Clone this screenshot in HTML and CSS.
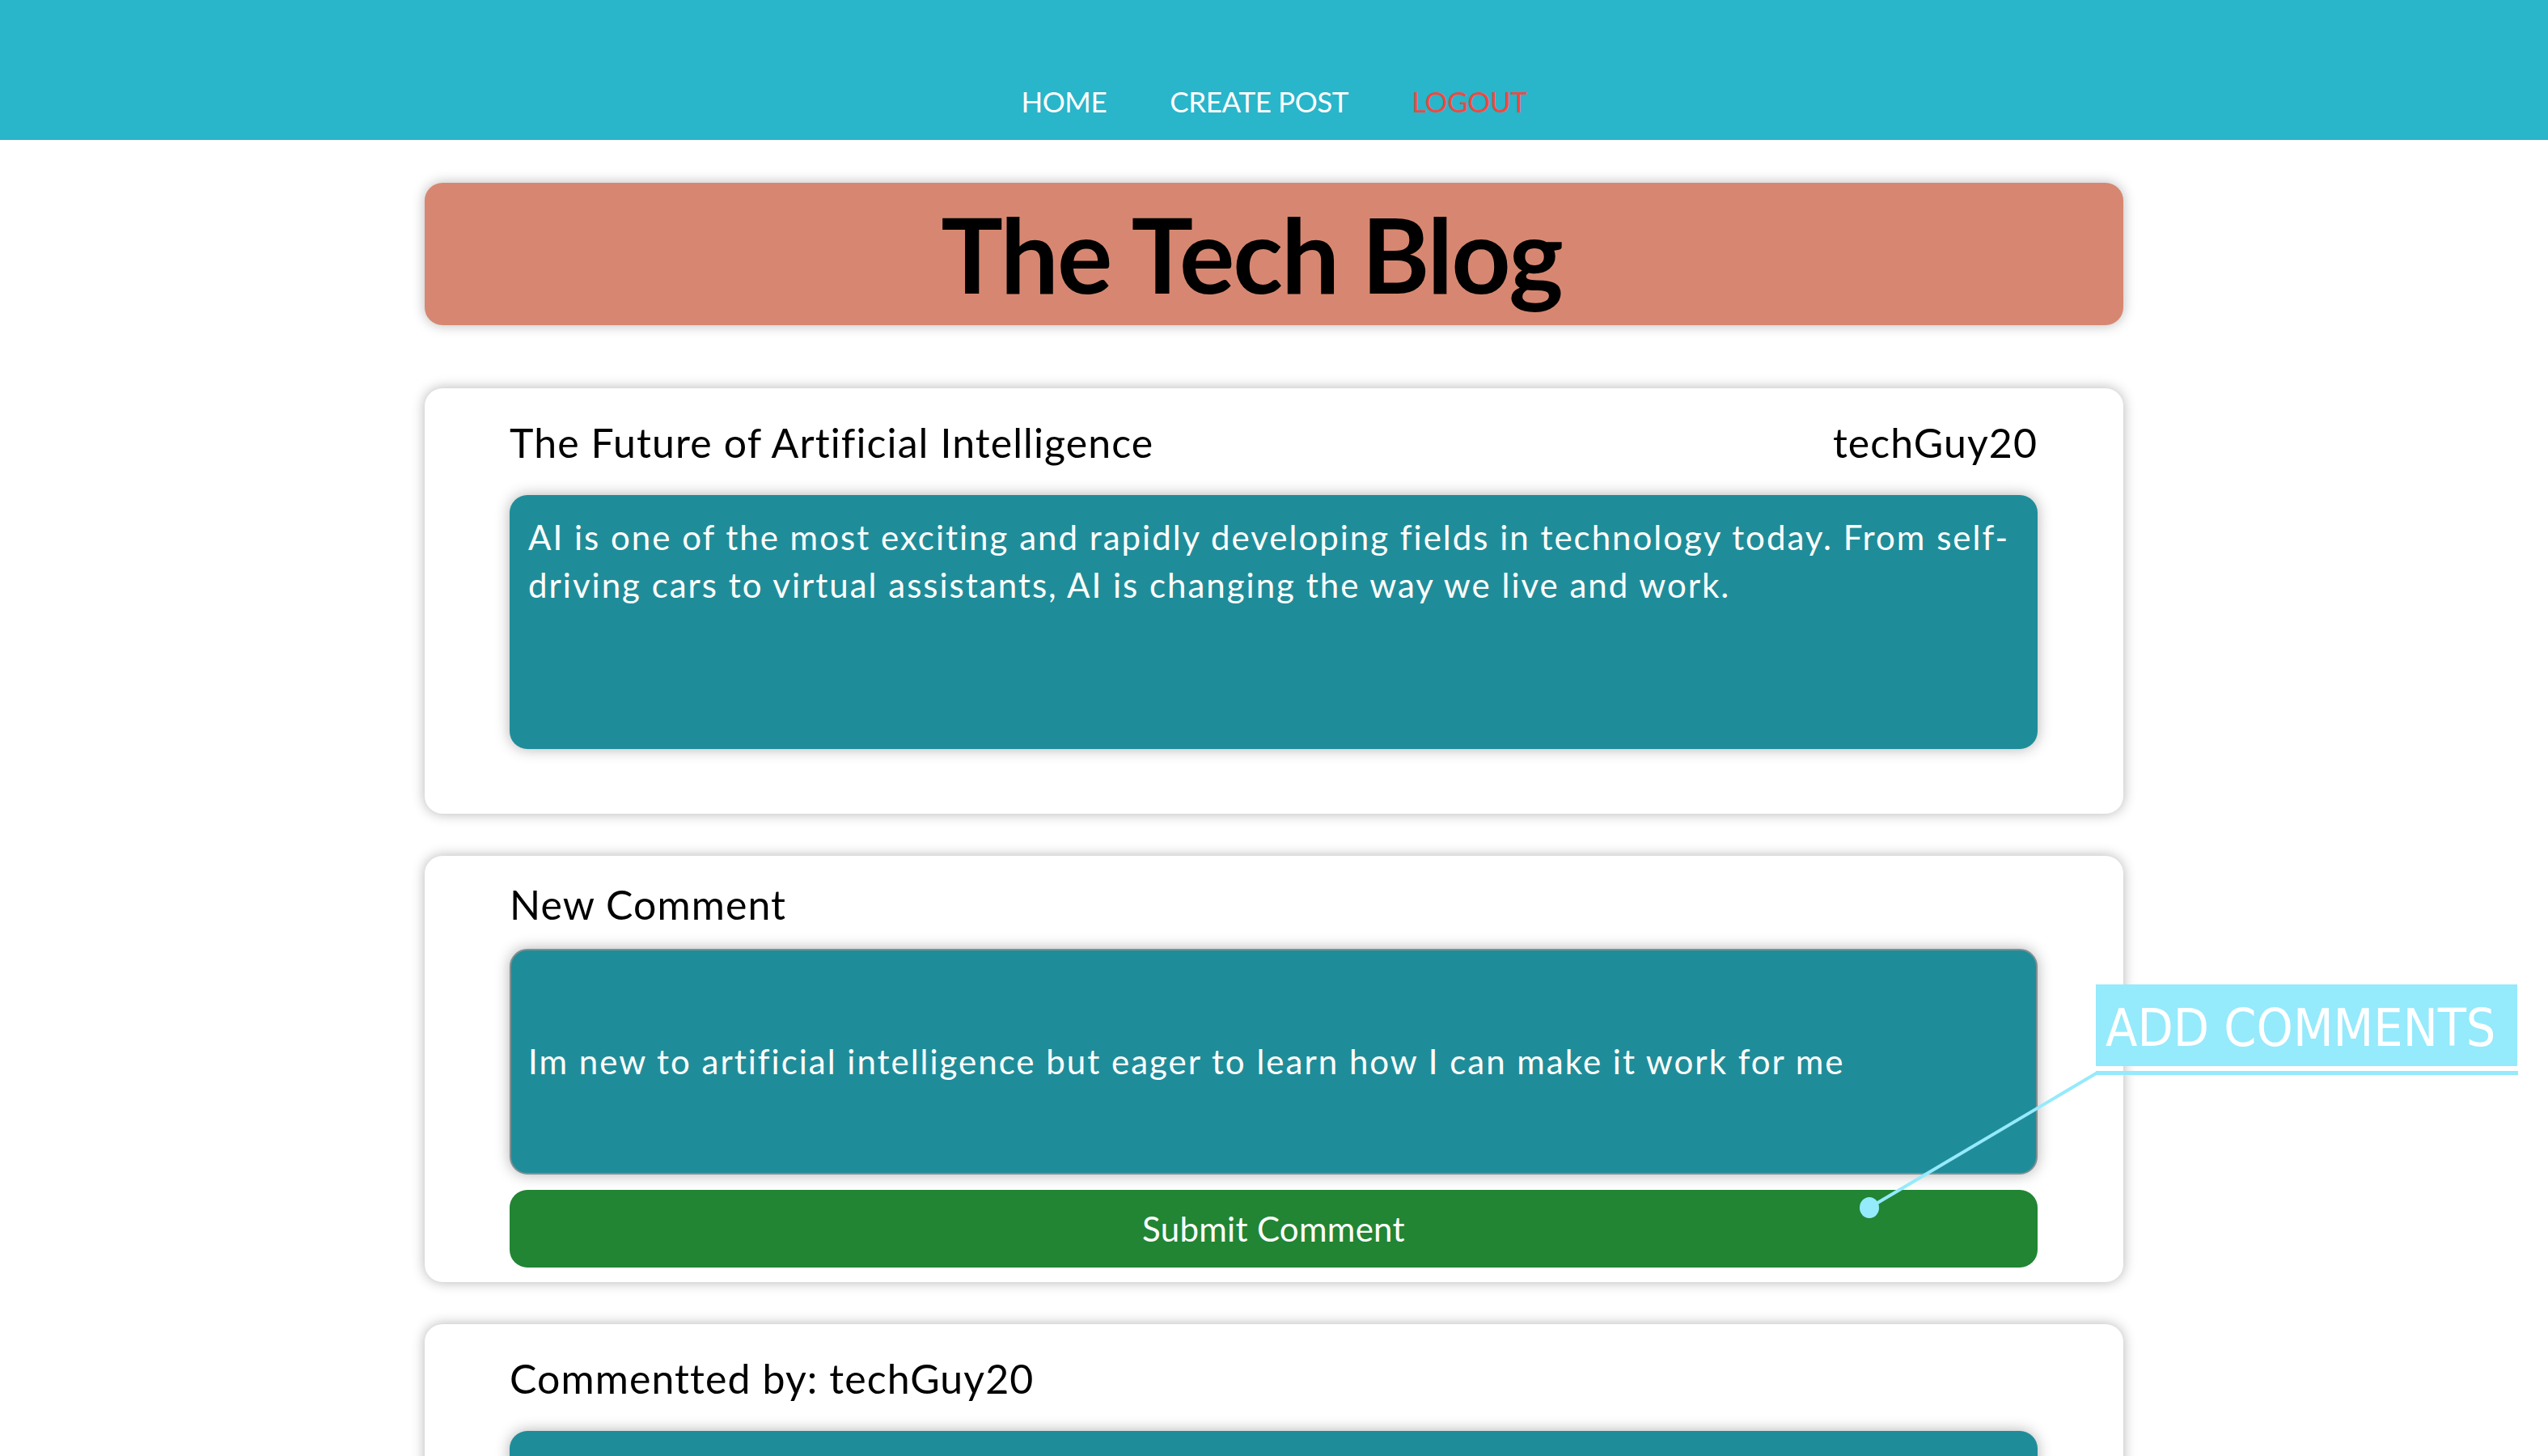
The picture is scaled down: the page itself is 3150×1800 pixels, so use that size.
FILE: index.html
```html
<!DOCTYPE html>
<html lang="en">
<head>
<meta charset="utf-8">
<title>The Tech Blog</title>
<link rel="stylesheet" href="styles.css">
</head>
<body>
<nav class="navbar">
  <a class="nav-link" href="#">HOME</a>
  <a class="nav-link" href="#">CREATE POST</a>
  <a class="nav-link logout" href="#">LOGOUT</a>
</nav>
<main class="container">
  <header class="banner"><h1 class="banner-title">The Tech Blog</h1></header>

  <section class="card">
    <div class="card-head">
      <h2 class="card-title">The Future of Artificial Intelligence</h2>
      <span class="card-author">techGuy20</span>
    </div>
    <div class="teal-box post-body">AI is one of the most exciting and rapidly developing fields in technology today. From self-driving cars to virtual assistants, AI is changing the way we live and work.</div>
  </section>

  <section class="card card-form">
    <h2 class="card-title form-title">New Comment</h2>
    <div class="teal-box comment-input">Im new to artificial intelligence but eager to learn how I can make it work for me</div>
    <button class="submit-btn" type="button">Submit Comment</button>
  </section>

  <section class="card">
    <h2 class="card-title">Commentted by: techGuy20</h2>
    <div class="teal-box comment-body"></div>
  </section>
</main>

<div class="callout">ADD COMMENTS</div>
<svg class="callout-lines" width="3150" height="1800" viewBox="0 0 3150 1800">
  <rect x="2591" y="1324" width="522" height="5" fill="#95eafc"/>
  <line x1="2593" y1="1326" x2="2311" y2="1493" stroke="#95eafc" stroke-width="4"/>
  <ellipse cx="2311" cy="1493" rx="12" ry="13" fill="#95eafc"/>
</svg>
</body>
</html>
```
FILE: styles.css
```css
html, body {
  margin: 0;
  padding: 0;
}
body {
  font-family: "Lato", "Open Sans", sans-serif;
  background: #ffffff;
  color: #000;
  position: relative;
  overflow: hidden;
  height: 1800px;
}
.navbar {
  height: 173px;
  box-sizing: border-box;
  background: #29b5ca;
  display: flex;
  justify-content: center;
  align-items: flex-end;
  gap: 78px;
  padding-bottom: 26px;
}
.nav-link {
  color: #ffffff;
  text-decoration: none;
  font-size: 35px;
  line-height: 43px;
  letter-spacing: -0.4px;
}
.nav-link.logout {
  color: #f4473f;
}
.container {
  width: 2100px;
  margin: 53px auto 0;
  display: flex;
  flex-direction: column;
}
.banner {
  background: #d78771;
  border-radius: 22px;
  padding: 11px 0;
  box-shadow: 0 0 16px rgba(0, 0, 0, 0.28);
  text-align: center;
  margin-bottom: 78px;
}
.banner-title {
  margin: 0;
  font-size: 128px;
  line-height: 154px;
  font-weight: 700;
  letter-spacing: -2px;
  padding-right: 56px;
}
.card {
  background: #fff;
  border-radius: 22px;
  box-shadow: 0 0 16px rgba(0, 0, 0, 0.3);
  padding: 37px 106px 80px 105px;
  margin-bottom: 52px;
  display: flex;
  flex-direction: column;
}
.card-form {
  padding-top: 30px;
  padding-bottom: 18px;
}
.card-head {
  display: flex;
  justify-content: space-between;
  align-items: baseline;
}
.card-title, .card-author {
  margin: 0 0 35px;
  font-size: 50px;
  line-height: 60px;
  font-weight: 400;
  letter-spacing: 1.1px;
}
.form-title {
  margin-bottom: 25px;
}
.teal-box {
  background: #1f8d99;
  color: #fff;
  border-radius: 22px;
  box-shadow: 0 0 18px rgba(0, 0, 0, 0.3);
  font-size: 42px;
  line-height: 59px;
  letter-spacing: 2px;
  padding: 23px 20px 23px 23px;
  box-sizing: border-box;
}
.post-body {
  min-height: 314px;
}
.comment-input {
  height: 279px;
  display: flex;
  align-items: center;
  border: 2px solid #7f8f92;
  padding-left: 21px;
}
.comment-body {
  min-height: 314px;
}
.submit-btn {
  margin-top: 19px;
  height: 96px;
  border: none;
  border-radius: 22px;
  background: #218534;
  color: #fff;
  font-family: inherit;
  font-size: 42px;
  letter-spacing: 0.3px;
}
.callout {
  position: absolute;
  left: 2591px;
  top: 1217px;
  width: 521px;
  height: 101px;
  background: #95eafc;
  color: #fff;
  font-family: "DejaVu Sans Condensed", "DejaVu Sans", sans-serif;
  font-stretch: condensed;
  font-size: 64px;
  line-height: 109px;
  padding-left: 12px;
  box-sizing: border-box;
  white-space: nowrap;
  overflow: hidden;
}
.callout-lines {
  position: absolute;
  left: 0;
  top: 0;
  pointer-events: none;
}
```
